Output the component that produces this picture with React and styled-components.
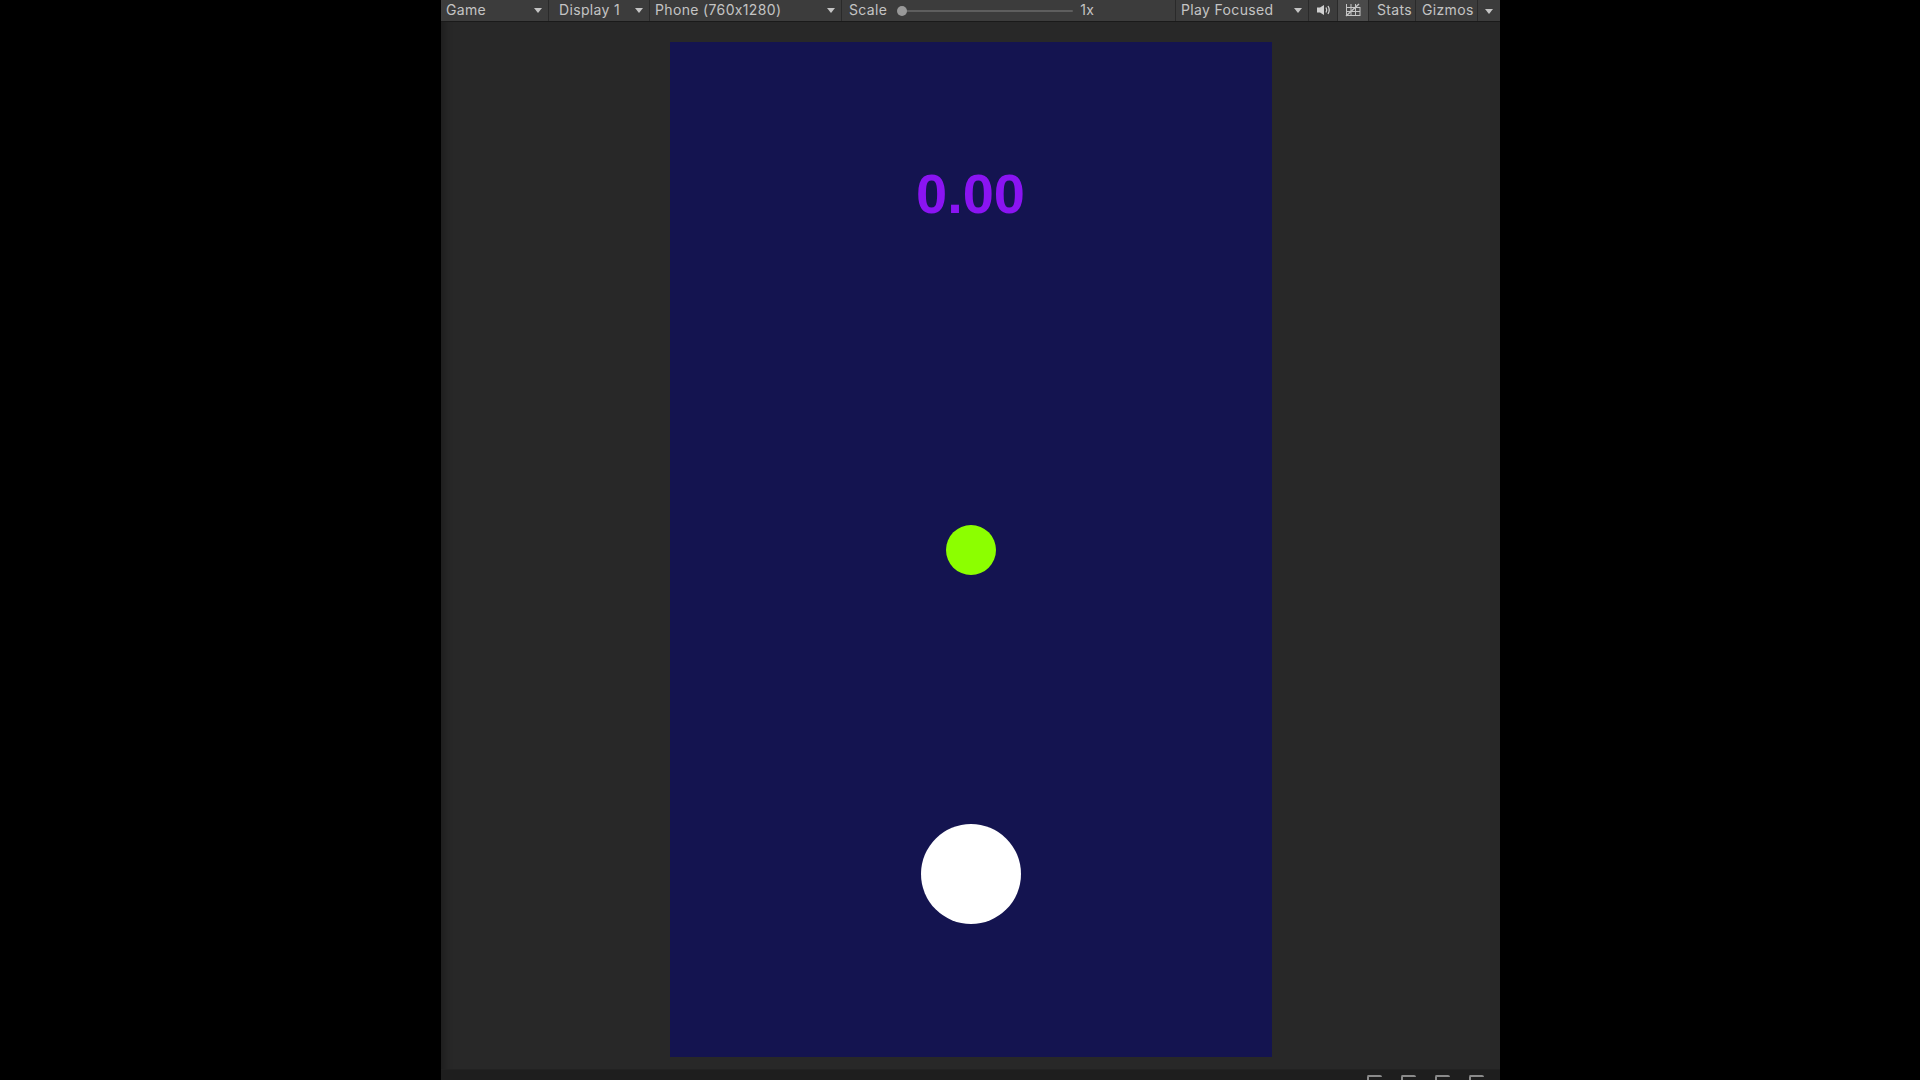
import React from 'react';
import styled, { createGlobalStyle } from 'styled-components';

const GlobalStyle = createGlobalStyle`
  html, body {
    margin: 0;
    padding: 0;
    background: #000;
    height: 100%;
    overflow: hidden;
  }
  #root {
    height: 100%;
  }
`;

const Screen = styled.div`
  width: 1920px;
  height: 1080px;
  display: flex;
  background: #000;
  font-family: Inter, "Liberation Sans", sans-serif;
`;

const Panel = styled.div`
  margin-left: 441px;
  width: 1059px;
  height: 100%;
  display: flex;
  flex-direction: column;
  background: #282828;
  box-shadow: inset 10px 0 10px -8px rgba(0, 0, 0, 0.35);
`;

const Toolbar = styled.div`
  height: 21px;
  flex-shrink: 0;
  display: flex;
  align-items: stretch;
  background: #3c3c3c;
  border-bottom: 1px solid #1a1a1a;
  color: #c4c4c4;
  font-size: 14px;
  line-height: 17px;
  letter-spacing: 0.35px;
  font-feature-settings: "calt" 0;
`;

const Dropdown = styled.div`
  width: ${(p) => p.w}px;
  flex-shrink: 0;
  box-sizing: border-box;
  display: flex;
  align-items: center;
  justify-content: space-between;
  padding: 0 6px 3px ${(p) => p.pl || 5}px;
  border-right: 1px solid #2a2a2a;
  white-space: nowrap;
`;

const Arrow = styled.span`
  width: 0;
  height: 0;
  border-left: 4px solid transparent;
  border-right: 4px solid transparent;
  border-top: 5px solid #c4c4c4;
  margin-top: 3px;
`;

const ScaleGroup = styled.div`
  width: 334px;
  flex-shrink: 0;
  box-sizing: border-box;
  display: flex;
  align-items: center;
  padding: 0 0 3px 7px;
  border-right: 1px solid #2a2a2a;
`;

const SliderTrack = styled.div`
  position: relative;
  width: 174px;
  height: 2px;
  margin: 3px 0 0 12px;
  background: #5e5e5e;
  border-radius: 1px;
`;

const SliderThumb = styled.div`
  position: absolute;
  left: -2px;
  top: -4px;
  width: 10px;
  height: 10px;
  border-radius: 50%;
  background: #999;
`;

const ScaleValue = styled.span`
  margin-left: 7px;
`;

const IconButton = styled.div`
  width: ${(p) => p.w}px;
  flex-shrink: 0;
  box-sizing: border-box;
  display: flex;
  align-items: center;
  justify-content: center;
  padding-bottom: 2px;
  background: ${(p) => (p.active ? '#4a4a4a' : 'transparent')};
  border-right: ${(p) => (p.last ? 'none' : '1px solid #2a2a2a')};
`;

const TextButton = styled.div`
  width: ${(p) => p.w}px;
  flex-shrink: 0;
  box-sizing: border-box;
  display: flex;
  align-items: center;
  padding: 0 0 3px ${(p) => p.pl || 6}px;
  border-right: 1px solid #2a2a2a;
`;

const Viewport = styled.div`
  flex: 1;
  display: flex;
  justify-content: center;
  padding-top: 20px;
`;

const GameView = styled.div`
  position: relative;
  width: 602px;
  height: 1015px;
  background: #141450;
`;

const Score = styled.div`
  position: absolute;
  left: 0;
  right: 0;
  top: 119px;
  text-align: center;
  font-family: "Liberation Sans", Arial, sans-serif;
  font-weight: 700;
  font-size: 56px;
  color: #8a14f2;
`;

const Ball = styled.div`
  position: absolute;
  left: 50%;
  top: ${(p) => p.y}px;
  width: ${(p) => p.size}px;
  height: ${(p) => p.size}px;
  margin-left: ${(p) => -p.size / 2}px;
  border-radius: 50%;
  background: ${(p) => p.color};
`;

const BottomBar = styled.div`
  height: 10px;
  flex-shrink: 0;
  display: flex;
  justify-content: flex-end;
  gap: 19px;
  padding-right: 16px;
  background: #1e1e1e;
  border-top: 1px solid #222;
  overflow: hidden;
`;

const BottomIcon = styled.div`
  width: 13px;
  height: 4px;
  margin-top: 5px;
  border-top: 2px solid #8a8a8a;
  border-left: 2px solid #8a8a8a;
  border-radius: 2px 2px 0 0;
`;

function SpeakerIcon() {
  return (
    <svg width="15" height="12" viewBox="0 0 15 12">
      <rect x="1" y="3.5" width="3" height="5" fill="#d0d0d0" />
      <path d="M4 3.5 L8 1 L8 11 L4 8.5 Z" fill="#d0d0d0" />
      <path d="M10 3.5 Q11.5 6 10 8.5" stroke="#d0d0d0" strokeWidth="1.3" fill="none" />
      <path d="M12 2 Q14.5 6 12 10" stroke="#d0d0d0" strokeWidth="1.3" fill="none" />
    </svg>
  );
}

function GridIcon() {
  return (
    <svg width="16" height="14" viewBox="0 0 16 14">
      <g stroke="#c4c4c4" strokeWidth="1" fill="none">
        <path d="M1.5 1 V13 M6 1 V13 M10.5 1 V13 M15 4 V13" />
        <path d="M1 4.5 H15 M1 8.5 H15 M1 12.5 H15" />
        <path d="M1 13 L14 1" strokeWidth="1.4" />
      </g>
    </svg>
  );
}

export default function App() {
  return (
    <>
      <GlobalStyle />
      <Screen>
        <Panel>
          <Toolbar>
            <Dropdown w={108} pl={5}>
              Game
              <Arrow />
            </Dropdown>
            <Dropdown w={101} pl={10}>
              Display 1
              <Arrow />
            </Dropdown>
            <Dropdown w={192} pl={5}>
              Phone (760x1280)
              <Arrow />
            </Dropdown>
            <ScaleGroup>
              Scale
              <SliderTrack>
                <SliderThumb />
              </SliderTrack>
              <ScaleValue>1x</ScaleValue>
            </ScaleGroup>
            <Dropdown w={133} pl={5}>
              Play Focused
              <Arrow />
            </Dropdown>
            <IconButton w={29}>
              <SpeakerIcon />
            </IconButton>
            <IconButton w={31} active>
              <GridIcon />
            </IconButton>
            <TextButton w={47} pl={8}>Stats</TextButton>
            <TextButton w={62} pl={6}>Gizmos</TextButton>
            <IconButton w={21} last>
              <Arrow />
            </IconButton>
          </Toolbar>
          <Viewport>
            <GameView>
              <Score>0.00</Score>
              <Ball y={483} size={50} color="#8cff00" />
              <Ball y={782} size={100} color="#ffffff" />
            </GameView>
          </Viewport>
          <BottomBar>
            <BottomIcon />
            <BottomIcon />
            <BottomIcon />
            <BottomIcon />
          </BottomBar>
        </Panel>
      </Screen>
    </>
  );
}
